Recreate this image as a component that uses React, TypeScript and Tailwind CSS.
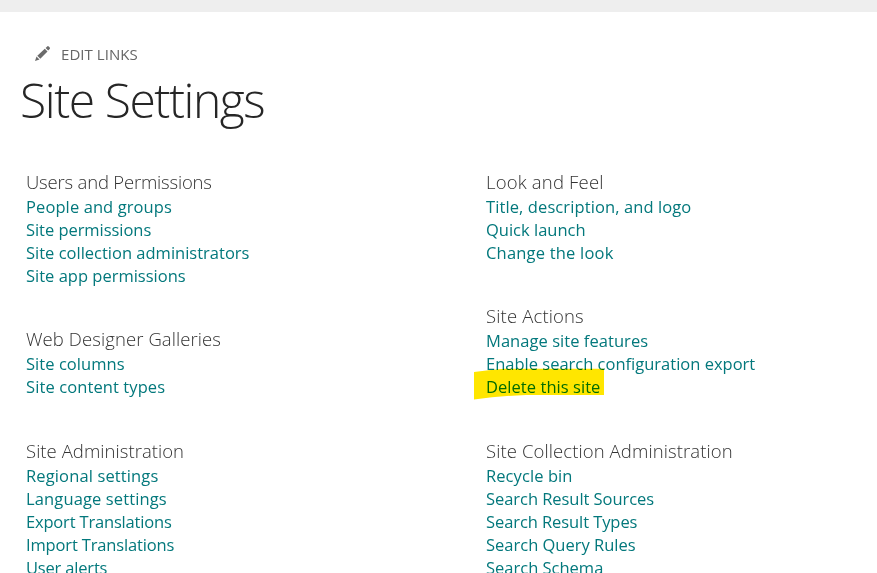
import React from "react";

type Link = { label: string; track: string; marked?: boolean };
type Section = { title: string; track: string; gap: string; links: Link[] };

const left: Section[] = [
  {
    title: "Users and Permissions", track: "tracking-[-0.19px]", gap: "mb-[38px]",
    links: [
      { label: "People and groups", track: "tracking-[0.1px]" },
      { label: "Site permissions", track: "tracking-[-0.05px]" },
      { label: "Site collection administrators", track: "tracking-[0px]" },
      { label: "Site app permissions", track: "tracking-[0px]" },
    ],
  },
  {
    title: "Web Designer Galleries", track: "tracking-[0.09px]", gap: "mb-[39px]",
    links: [
      { label: "Site columns", track: "tracking-[0.05px]" },
      { label: "Site content types", track: "tracking-[0.1px]" },
    ],
  },
  {
    title: "Site Administration", track: "tracking-[0.05px]", gap: "mb-0",
    links: [
      { label: "Regional settings", track: "tracking-[0.13px]" },
      { label: "Language settings", track: "tracking-[0.13px]" },
      { label: "Export Translations", track: "tracking-[-0.18px]" },
      { label: "Import Translations", track: "tracking-[-0.15px]" },
      { label: "User alerts", track: "tracking-[-0.18px]" },
    ],
  },
];

const right: Section[] = [
  {
    title: "Look and Feel", track: "tracking-[0.18px]", gap: "mb-[38px]",
    links: [
      { label: "Title, description, and logo", track: "tracking-[0.1px]" },
      { label: "Quick launch", track: "tracking-[0px]" },
      { label: "Change the look", track: "tracking-[0.2px]" },
    ],
  },
  {
    title: "Site Actions", track: "tracking-[0.15px]", gap: "mb-[39px]",
    links: [
      { label: "Manage site features", track: "tracking-[0.05px]" },
      { label: "Enable search configuration export", track: "tracking-[0px]" },
      { label: "Delete this site", track: "tracking-[0.05px]", marked: true },
    ],
  },
  {
    title: "Site Collection Administration", track: "tracking-[0.1px]", gap: "mb-0",
    links: [
      { label: "Recycle bin", track: "tracking-[0.08px]" },
      { label: "Search Result Sources", track: "tracking-[-0.05px]" },
      { label: "Search Result Types", track: "tracking-[-0.08px]" },
      { label: "Search Query Rules", track: "tracking-[0px]" },
      { label: "Search Schema", track: "tracking-[0px]" },
    ],
  },
];

function Column({ sections }: { sections: Section[] }) {
  return (
    <div className="w-[460px] shrink-0">
      {sections.map((s) => (
        <section key={s.title} className={s.gap}>
          <h2 className={`h-[27px] text-[18.5px] leading-[27px] font-light text-[#333] ${s.track}`}>{s.title}</h2>
          <ul>
            {s.links.map((l) => (
              <li key={l.label} className="relative h-[23px] text-[16.5px] leading-[23px] text-[#03787c]">
                <a className={l.track}>{l.label}</a>
                {l.marked && (
                  <svg className="absolute -top-[7px] -left-[12px] mix-blend-multiply" width="132" height="34" viewBox="0 0 132 34">
                    <path d="M0 4 Q14 2 30 .8 H130 V27 H52 Q26 28 0 31.5Z" fill="#ffe600" />
                  </svg>
                )}
              </li>
            ))}
          </ul>
        </section>
      ))}
    </div>
  );
}

export default function App() {
  return (
    <div className="h-[573px] w-[877px] overflow-hidden bg-white font-['Open_Sans','Noto_Sans',sans-serif] whitespace-nowrap">
      <div className="h-3 bg-[#eee]" />
      <div className="flex h-[82px] items-center pl-[34px]">
        <svg width="17" height="17" viewBox="0 0 17 17" fill="#6b6b6b">
          <path d="M1 16 L2.5 11.5 L5.5 14.5Z M3.3 10.7 L10.8 3.7 L13.5 6.4 L6.3 13.7Z M11.6 2.9 L13.2 1.4 Q14 .7 15 1.7 L15.6 2.3 Q16.4 3.2 15.7 4 L14.2 5.6Z" />
        </svg>
        <span className="ml-[10px] pt-[3px] text-[15px] tracking-[0.05px] text-[#666]">EDIT LINKS</span>
      </div>
      <h1 className="-mt-[26px] h-[64px] pl-5 text-[48px] leading-[64px] font-light tracking-[-1.45px] text-[#262626]">Site Settings</h1>
      <main className="mt-[36px] flex pl-[26px]">
        <Column sections={left} />
        <Column sections={right} />
      </main>
    </div>
  );
}
